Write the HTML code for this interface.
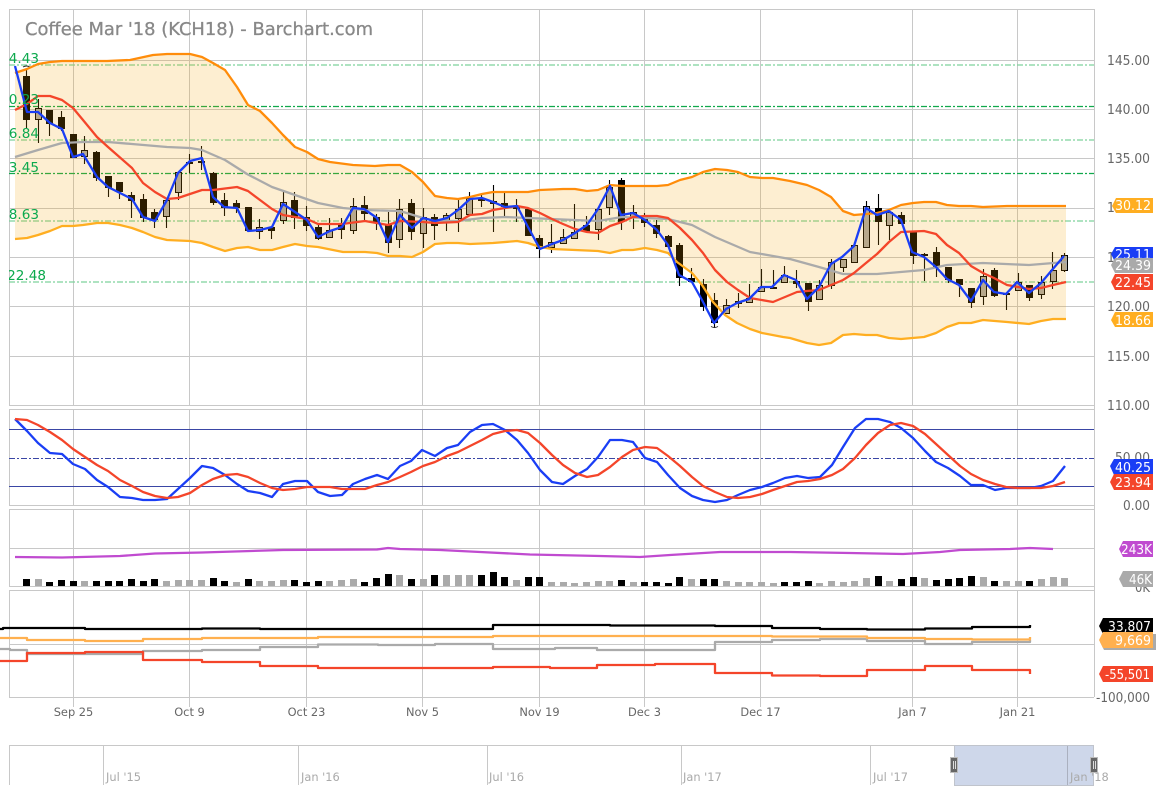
<!DOCTYPE html>
<html><head><meta charset="utf-8"><title>Coffee Mar '18 (KCH18) - Barchart.com</title>
<style>
html,body{margin:0;padding:0;background:#fff;width:1156px;height:800px;overflow:hidden}
svg{display:block}
text{font-family:"DejaVu Sans","Liberation Sans",sans-serif}
.ax{font-size:13.2px;fill:#666}
.xl{font-size:11.4px;fill:#666;text-anchor:middle}
.nv{font-size:11.4px;fill:#aaa}
.bd{font-size:13.4px;fill:#fff;text-anchor:end}
.fb{font-size:13.6px;fill:#0ca94d;text-anchor:end}
.l{fill:none;stroke-width:2.3;stroke-linejoin:round}
</style></head><body>
<svg width="1156" height="800" viewBox="0 0 1156 800" xmlns="http://www.w3.org/2000/svg">
<defs><clipPath id="c"><rect x="9" y="9" width="1086" height="396"/></clipPath></defs>
<rect width="1156" height="800" fill="#fff"/>

<!-- grid -->
<path fill="none" stroke="#c8c8c8" stroke-width="1" d="M9 9.5H1094.5M9 60.5H1094M9 109.5H1094M9 158.5H1094M9 208.5H1094M9 257.5H1094M9 306.5H1094M9 356.5H1094M9 405.5H1094M9 409.5H1094M9 505.5H1094M9 509.5H1094M9 548.5H1094M9 586.5H1094M9 590.5H1094M9 644.5H1094M9 697.5H1094
M1094.5 9V697
M9.5 9V405M9.5 409V505M9.5 509V586M9.5 590V697
M73.5 9V405M73.5 409V505M73.5 509V586M73.5 590V707
M189.5 9V405M189.5 409V505M189.5 509V586M189.5 590V707
M306.5 9V405M306.5 409V505M306.5 509V586M306.5 590V707
M422.5 9V405M422.5 409V505M422.5 509V586M422.5 590V707
M539.5 9V405M539.5 409V505M539.5 509V586M539.5 590V707
M644.5 9V405M644.5 409V505M644.5 509V586M644.5 590V707
M760.5 9V405M760.5 409V505M760.5 509V586M760.5 590V707
M912.5 9V405M912.5 409V505M912.5 509V586M912.5 590V707
M1017.5 9V405M1017.5 409V505M1017.5 509V586M1017.5 590V707"/>

<!-- title -->
<text x="25" y="35" font-size="18" fill="#888" stroke="#888" stroke-width=".3" textLength="348" lengthAdjust="spacingAndGlyphs">Coffee Mar '18 (KCH18) - Barchart.com</text>

<!-- fib lines -->
<g fill="none" stroke-dasharray="6 2 2 2" stroke-width="1.2">
<path stroke="#7dd29c" d="M9 65H1094M9 140H1094M9 221H1094M9 282H1094"/>
<path stroke="#10a84c" d="M9 106.500H1094M9 173.500H1094"/>
</g>

<!-- wicks -->
<path fill="none" stroke="#000" stroke-width="1.1" d="M26.5 68V128M38.5 99V143M49.5 110V136M61.5 111V131M73.5 134V158M84.5 136V164M96.5 151V181M108.5 176V197M119.5 182V199M131.5 192V218M143.5 194V222M154.5 209V228M166.5 200V228M178.5 172V200M189.5 154V173M201.5 146V170M213.5 172V205M224.5 193V216M236.5 200V213M248.5 207V231M259.5 219V239M271.5 226V239M283.5 192V224M294.5 192V229M306.5 206V231M318.5 225V240M329.5 218V237M341.5 218V239M353.5 198V234M364.5 196V220M376.5 214V230M388.5 212V253M399.5 199V248M411.5 199V240M423.5 208V248M434.5 214V240M446.5 213V231M458.5 200V232M469.5 192V215M481.5 195V207M493.5 185V232M504.5 193V218M516.5 199V222M528.5 209V236M539.5 235V258M551.5 224V253M563.5 229V244M574.5 204V238M586.5 216V232M598.5 209V240M609.5 180V215M621.5 178V230M633.5 205V229M644.5 213V227M656.5 220V238M668.5 235V247M679.5 243V286M691.5 268V282M703.5 279V311M714.5 293V328M726.5 299V313M738.5 293V308M749.5 284V302M761.5 269V291M773.5 270V289M784.5 266V282M796.5 270V288M808.5 283V311M819.5 280V299M831.5 259V289M843.5 259V272M854.5 242V263M866.5 201V247M878.5 194V245M889.5 211V240M901.5 212V224M913.5 231V264M924.5 253V281M936.5 247V277M948.5 267V283M959.5 279V297M971.5 288V308M983.5 269V305M994.5 268V297M1006.5 293V310M1018.5 273V290M1029.5 285V301M1041.5 276V299M1052.5 252V289M1064.5 253V272"/>
<!-- small markers -->
<path fill="none" stroke="#222" stroke-width="1" d="M23 67q3.5-2 7 0M711 326.500q3.500 2 7 0"/>

<!-- dark bodies -->
<path fill="#000" d="M23 76h7v44h-7zM46 110h7v14h-7zM58 117h7v12h-7zM70 134h7v24h-7zM93 152h7v26h-7zM105 176h7v12h-7zM116 182h7v10h-7zM128 195h7v6h-7zM140 199h7v19h-7zM151 212h7v8h-7zM186 162h7v2h-7zM198 161h7v2h-7zM210 173h7v30h-7zM221 200h7v8h-7zM233 203h7v5h-7zM245 207h7v24h-7zM268 227h7v4h-7zM291 200h7v18h-7zM303 217h7v9h-7zM315 227h7v12h-7zM338 225h7v5h-7zM361 205h7v9h-7zM373 217h7v5h-7zM385 225h7v18h-7zM408 203h7v29h-7zM431 217h7v9h-7zM478 198h7v3h-7zM490 201h7v3h-7zM501 203h7v4h-7zM513 206h7v3h-7zM525 209h7v27h-7zM536 238h7v11h-7zM583 225h7v7h-7zM618 180h7v42h-7zM641 218h7v5h-7zM653 225h7v9h-7zM665 236h7v11h-7zM676 245h7v33h-7zM688 278h7v4h-7zM700 284h7v23h-7zM711 300h7v23h-7zM735 301h7v3h-7zM770 287h7v2h-7zM793 281h7v3h-7zM805 283h7v19h-7zM875 208h7v14h-7zM898 215h7v9h-7zM910 232h7v24h-7zM921 254h7v2h-7zM933 252h7v15h-7zM945 267h7v13h-7zM956 279h7v6h-7zM968 288h7v15h-7zM991 270h7v26h-7zM1003 293h7v2h-7zM1026 285h7v13h-7z"/>
<!-- hollow bodies -->
<path fill="#aaa" stroke="#000" stroke-width="1" d="M35.500 108.500h6v11h-6zM81.500 150.500h6v6h-6zM163.500 200.500h6v16h-6zM175.500 172.500h6v20h-6zM256.500 227.500h6v4h-6zM280.500 202.500h6v18h-6zM326.500 230.500h6v7h-6zM350.500 206.500h6v24h-6zM396.500 209.500h6v30h-6zM420.500 217.500h6v16h-6zM443.500 215.500h6v6h-6zM455.500 209.500h6v9h-6zM466.500 198.500h6v16h-6zM548.500 242.500h6v5h-6zM560.500 237.500h6v6h-6zM571.500 232.500h6v6h-6zM595.500 209.500h6v20h-6zM606.500 187.500h6v20h-6zM630.500 212.500h6v5h-6zM723.500 305.500h6v8h-6zM746.500 298.500h6v4h-6zM758.500 287.500h6v4h-6zM781.500 275.500h6v7h-6zM816.500 285.500h6v14h-6zM828.500 262.500h6v23h-6zM840.500 259.500h6v8h-6zM851.500 245.500h6v17h-6zM863.500 206.500h6v41h-6zM886.500 212.500h6v13h-6zM980.500 276.500h6v20h-6zM1015.500 282.500h6v8h-6zM1038.500 282.500h6v12h-6zM1050.500 270.500h6v11h-6zM1061.500 255.500h6v15h-6z"/>

<!-- band fill -->
<path fill="#f5a000" fill-opacity=".18" d="M15 73L27 69L38 64L50 62L62 61L83 61L107 61L130 60L153 55L167 54L190 54L202 57L213 63L225 70L237 87L248 105L260 111L272 123L283 135L295 147L307 152L318 159L330 162L353 165L375 166L388 165L400 165L412 172L423 182L435 196L447 198L458 199L470 197L482 194L493 192L505 192L528 192L540 190L563 189L575 189L587 191L598 190L610 185L622 186L645 186L657 186L668 185L680 180L692 177L703 172L715 169L727 170L738 172L750 177L762 178L773 178L790 181L807 185L819 190L831 197L843 211L854 215L866 214L877 213L889 210L901 205L913 203L924 202L936 202L947 205L959 206L971 206L983 207L1007 206L1029 206L1041 206L1066 206L1066 319L1053 319L1041 321L1029 324L1007 322L983 320L971 323L959 323L947 327L936 333L924 337L901 339L889 338L877 335L866 335L854 334L843 335L831 343L819 345L807 343L790 338L783 337L762 333L750 329L737 323L725 315L713 302L702 285L692 273L677 262L668 253L657 250L645 248L633 250L622 250L610 253L598 251L575 250L552 249L540 247L528 243L517 241L493 243L470 244L458 243L447 243L435 244L423 252L412 257L400 256L388 256L377 253L365 252L343 252L318 247L307 246L295 244L283 247L272 250L260 250L248 247L237 248L225 251L213 247L202 243L190 241L167 240L155 237L143 232L132 228L120 225L108 223L97 223L83 225L73 226L62 226L50 231L38 235L27 238L15 239Z"/>

<!-- bollinger lines -->
<path class="l" stroke="#ff8c0a" d="M15 73L27 69L38 64L50 62L62 61L83 61L107 61L130 60L153 55L167 54L190 54L202 57L213 63L225 70L237 87L248 105L260 111L272 123L283 135L295 147L307 152L318 159L330 162L353 165L375 166L388 165L400 165L412 172L423 182L435 196L447 198L458 199L470 197L482 194L493 192L505 192L528 192L540 190L563 189L575 189L587 191L598 190L610 185L622 186L645 186L657 186L668 185L680 180L692 177L703 172L715 169L727 170L738 172L750 177L762 178L773 178L790 181L807 185L819 190L831 197L843 211L854 215L866 214L877 213L889 210L901 205L913 203L924 202L936 202L947 205L959 206L971 206L983 207L1007 206L1029 206L1041 206L1066 206"/>
<path class="l" stroke="#ffae21" d="M15 239L27 238L38 235L50 231L62 226L73 226L83 225L97 223L108 223L120 225L132 228L143 232L155 237L167 240L190 241L202 243L213 247L225 251L237 248L248 247L260 250L272 250L283 247L295 244L307 246L318 247L343 252L365 252L377 253L388 256L400 256L412 257L423 252L435 244L447 243L458 243L470 244L493 243L517 241L528 243L540 247L552 249L575 250L598 251L610 253L622 250L633 250L645 248L657 250L668 253L677 262L692 273L702 285L713 302L725 315L737 323L750 329L762 333L783 337L790 338L807 343L819 345L831 343L843 335L854 334L866 335L877 335L889 338L901 339L924 337L936 333L947 327L959 323L971 323L983 320L1007 322L1029 324L1041 321L1053 319L1066 319"/>
<!-- gray MA -->
<path class="l" stroke="#aaa" d="M15 157L38 150L62 143L83 142L108 142L132 144L167 147L190 148L202 150L225 160L247 174L272 187L295 195L318 203L343 208L365 210L400 211L423 218L435 221L458 221L482 218L505 217L528 218L575 220L598 221L622 217L645 218L668 219L692 225L715 237L750 252L773 256L790 259L819 267L843 274L877 274L924 270L947 265L983 263L1029 265L1066 262"/>
<!-- red MA -->
<path class="l" stroke="#f4452a" d="M15 110L27 104L38 96L50 96L62 100L73 108L83 120L97 137L108 147L132 168L143 183L155 192L167 199L178 198L190 194L202 190L213 190L237 187L248 191L260 200L272 209L283 215L295 217L307 219L318 224L342 224L365 221L388 225L400 221L423 222L435 223L458 222L470 215L482 214L493 210L505 208L517 206L528 208L540 213L552 219L563 224L575 229L587 232L598 233L610 226L622 222L633 217L645 216L657 216L668 218L680 228L692 240L703 253L715 270L727 282L738 290L750 298L773 302L785 297L797 292L807 291L819 290L831 285L843 280L854 273L866 263L877 254L889 242L901 232L924 231L936 234L947 245L959 253L971 266L983 273L994 278L1007 285L1029 289L1041 288L1053 285L1066 282"/>
<!-- blue -->
<path class="l" stroke="#1a3ef5" d="M15 66L27 112L38 112L50 123L62 129L73 157L83 154L97 177L108 187L132 199L143 217L155 221L167 200L178 173L190 161L202 158L213 197L224 207L237 208L248 231L260 230L272 227L283 204L295 212L307 220L318 237L330 231L342 227L353 208L364 209L377 218L388 242L400 215L412 228L423 218L435 221L447 218L458 210L470 199L482 198L493 202L505 207L517 206L528 227L540 249L552 244L563 240L575 233L587 225L598 209L610 186L621 215L633 213L645 220L657 230L668 245L679 275L692 282L702 300L714 323L726 309L737 303L749 299L761 287L772 287L784 275L796 280L807 299L819 287L831 264L842 257L854 246L866 208L877 215L889 211L901 220L912 252L924 257L936 267L947 279L959 285L971 301L983 280L994 292L1006 294L1017 282L1029 293L1041 283L1052 270L1064 256"/>

<!-- fib labels -->
<g clip-path="url(#c)">
<text class="fb" x="39" y="63">144.43</text>
<text class="fb" x="39" y="104">140.23</text>
<text class="fb" x="39" y="138">136.84</text>
<text class="fb" x="39" y="172">133.45</text>
<text class="fb" x="39" y="219">128.63</text>
<text class="fb" x="46" y="280">122.48</text>
</g>

<!-- oscillator refs -->
<path fill="none" stroke="#3a46a5" stroke-width="1" d="M9 429.500H1094M9 486.500H1094"/>
<path fill="none" stroke="#3a46a5" stroke-width="1" stroke-dasharray="6 2 2 2" d="M9 458.500H1094"/>
<path class="l" stroke="#1a3ef5" d="M15 419L27 431L38 443L50 453L62 454L73 464L85 469L97 480L108 487L120 497L132 498L143 500L155 500L167 499L178 489L190 478L202 466L213 468L225 475L237 484L248 491L260 493L272 497L283 484L295 481L307 481L318 492L330 496L342 495L353 484L365 479L377 475L388 479L400 466L411 461L422 450L435 456L447 448L458 445L470 432L482 425L493 424L505 430L517 440L528 453L540 470L552 482L563 484L575 476L587 469L598 457L610 440L622 440L633 442L645 458L657 462L668 475L680 488L692 496L703 500L715 502L727 500L738 495L750 490L762 487L773 483L785 478L797 476L808 478L820 477L832 465L843 447L855 428L866 419L878 419L890 422L901 428L913 438L925 451L936 462L948 468L960 476L971 485L983 485L995 490L1006 488L1018 488L1030 488L1041 486L1053 481L1065 466"/>
<path class="l" stroke="#f4452a" d="M15 419L27 420L38 425L50 432L62 440L73 449L85 457L97 465L108 471L120 480L132 486L143 492L155 496L167 498L178 497L190 493L202 485L213 479L225 475L237 474L248 477L260 483L272 488L283 490L295 489L307 487L330 487L342 489L365 489L377 485L388 482L400 477L411 472L423 466L435 462L447 456L458 452L470 446L482 440L493 434L505 431L517 430L528 433L540 443L552 455L563 465L575 473L587 477L598 475L610 467L622 457L633 450L645 447L657 448L668 456L680 466L692 477L703 486L715 492L727 497L738 498L750 497L762 494L773 490L785 486L797 482L808 481L820 479L832 475L843 469L855 458L866 445L878 433L890 425L901 423L913 426L925 434L936 444L948 455L960 466L971 474L983 480L995 484L1006 487L1018 488L1030 488L1041 488L1053 486L1065 482"/>

<!-- volume -->
<path fill="#000" d="M23 579h7v7h-7zM46 582h7v4h-7zM58 580h7v6h-7zM70 581h7v5h-7zM93 581h7v5h-7zM105 581h7v5h-7zM116 581h7v5h-7zM128 579h7v7h-7zM140 581h7v5h-7zM151 579h7v7h-7zM210 578h7v8h-7zM221 581h7v5h-7zM245 579h7v7h-7zM291 580h7v6h-7zM303 582h7v4h-7zM315 581h7v5h-7zM361 582h7v4h-7zM373 578h7v8h-7zM385 574h7v12h-7zM408 579h7v7h-7zM431 575h7v11h-7zM478 575h7v11h-7zM490 572h7v14h-7zM501 577h7v9h-7zM525 577h7v9h-7zM536 577h7v9h-7zM618 580h7v6h-7zM641 582h7v4h-7zM653 582h7v4h-7zM665 583h7v3h-7zM676 577h7v9h-7zM700 579h7v7h-7zM711 579h7v7h-7zM781 582h7v4h-7zM793 582h7v4h-7zM805 581h7v5h-7zM875 576h7v10h-7zM898 579h7v7h-7zM910 577h7v9h-7zM933 580h7v6h-7zM945 579h7v7h-7zM956 578h7v8h-7zM968 576h7v10h-7zM991 581h7v5h-7zM1026 581h7v5h-7z"/>
<path fill="#aaa" d="M35 579h7v7h-7zM81 581h7v5h-7zM163 581h7v5h-7zM175 580h7v6h-7zM186 580h7v6h-7zM198 580h7v6h-7zM233 582h7v4h-7zM256 581h7v5h-7zM268 581h7v5h-7zM280 580h7v6h-7zM326 581h7v5h-7zM338 580h7v6h-7zM350 579h7v7h-7zM396 575h7v11h-7zM420 579h7v7h-7zM443 575h7v11h-7zM455 575h7v11h-7zM466 575h7v11h-7zM513 580h7v6h-7zM548 582h7v4h-7zM560 582h7v4h-7zM571 583h7v3h-7zM583 582h7v4h-7zM595 581h7v5h-7zM606 581h7v5h-7zM630 582h7v4h-7zM688 579h7v7h-7zM723 581h7v5h-7zM735 582h7v4h-7zM746 582h7v4h-7zM758 582h7v4h-7zM770 583h7v3h-7zM816 583h7v3h-7zM828 581h7v5h-7zM840 582h7v4h-7zM851 581h7v5h-7zM863 578h7v8h-7zM886 581h7v5h-7zM921 578h7v8h-7zM980 577h7v9h-7zM1003 581h7v5h-7zM1015 581h7v5h-7zM1038 579h7v7h-7zM1050 577h7v9h-7zM1061 578h7v8h-7z"/>
<path class="l" stroke="#c04bd0" d="M15 557L62 557.500L120 556L155 553.500L202 552.500L283 550L377 549.500L388 548L400 549L440 550L480 552L530 554.500L600 556L640 557L670 555L720 552L790 552L850 553L903 554L940 552L960 550L1010 549L1030 548L1053 549"/>

<!-- commitment of traders steps -->
<path class="l" stroke="#aaa" d="M0 649H10V650H27V654H143V651H202V650H260V647H318V644.500H378V645H435V644H493V649H555V648H597V650H715V642H772V640H820V639H867V641H925V644H972V642H1030V640"/>
<path class="l" stroke="#ffb04f" d="M0 638H27V640H85V641H143V639H202V638H318V637H493V636H772V636.500H867V638H925V639H972V639.500H1030V637"/>
<path class="l" stroke="#000" d="M0 629H3V628H85V629H202V628.500H260V629H493V625H610V625.500H715V626H772V628H820V629H867V629.500H925V628.500H972V627H1030V625"/>
<path class="l" stroke="#f4452a" d="M0 661H27V653H85V652H143V660H202V662H260V666H318V668H493V667H550V668H597V665H655V664H715V673H772V675.500H820V676H867V670H925V666H972V670H1030V674"/>

<!-- y axis -->
<text class="ax" x="1107" y="65" textLength="43" lengthAdjust="spacingAndGlyphs">145.00</text>
<text class="ax" x="1107" y="114" textLength="43" lengthAdjust="spacingAndGlyphs">140.00</text>
<text class="ax" x="1107" y="163" textLength="43" lengthAdjust="spacingAndGlyphs">135.00</text>
<text class="ax" x="1107" y="212" textLength="43" lengthAdjust="spacingAndGlyphs">130.00</text>
<text class="ax" x="1107" y="262" textLength="43" lengthAdjust="spacingAndGlyphs">125.00</text>
<text class="ax" x="1107" y="311" textLength="43" lengthAdjust="spacingAndGlyphs">120.00</text>
<text class="ax" x="1107" y="361" textLength="43" lengthAdjust="spacingAndGlyphs">115.00</text>
<text class="ax" x="1107" y="410" textLength="43" lengthAdjust="spacingAndGlyphs">110.00</text>
<text class="ax" x="1115" y="462" textLength="35" lengthAdjust="spacingAndGlyphs">50.00</text>
<text class="ax" x="1123" y="510" textLength="27" lengthAdjust="spacingAndGlyphs">0.00</text>
<text class="ax" x="1135" y="592" textLength="15" lengthAdjust="spacingAndGlyphs">0K</text>
<text class="ax" x="1096" y="702" textLength="54" lengthAdjust="spacingAndGlyphs">-100,000</text>

<!-- badges -->
<path fill="#ffae21" d="M1112 206l4-8h37v15h-37z"/><text class="bd" x="1151" y="210" textLength="36" lengthAdjust="spacingAndGlyphs">30.12</text>
<path fill="#1a3ef5" d="M1111 254l4-7h38v15h-38z"/><text class="bd" x="1151" y="259" textLength="36" lengthAdjust="spacingAndGlyphs">25.11</text>
<path fill="#aaa" d="M1111 265l4-7h38v15h-38z"/><text class="bd" x="1151" y="270" textLength="36" lengthAdjust="spacingAndGlyphs">24.39</text>
<path fill="#f4452a" d="M1111 282l4-8h38v16h-38z"/><text class="bd" x="1151" y="287" textLength="36" lengthAdjust="spacingAndGlyphs">22.45</text>
<path fill="#ffae21" d="M1111 320l4-8h38v15h-38z"/><text class="bd" x="1151" y="325" textLength="36" lengthAdjust="spacingAndGlyphs">18.66</text>
<path fill="#1a3ef5" d="M1110 466l4-7h39v16h-39z"/><text class="bd" x="1151" y="472" textLength="36" lengthAdjust="spacingAndGlyphs">40.25</text>
<path fill="#f4452a" d="M1110 482l4-8h39v16h-39z"/><text class="bd" x="1151" y="487" textLength="36" lengthAdjust="spacingAndGlyphs">23.94</text>
<path fill="#c04bd0" d="M1119 549l4-8h30v16h-30z"/><text class="bd" x="1152" y="554" textLength="31" lengthAdjust="spacingAndGlyphs">243K</text>
<path fill="#aaa" d="M1119 579l4-8h30v16h-30z"/><text class="bd" x="1152" y="584" textLength="23" lengthAdjust="spacingAndGlyphs">46K</text>
<path fill="#000" d="M1099 626l4-8h50v16h-50z"/><text class="bd" x="1151" y="631" textLength="43" lengthAdjust="spacingAndGlyphs">33,807</text>
<path fill="#aaa" d="M1100 642l4-8h53v16h-53z"/>
<path fill="#ffb04f" d="M1099 640l4-8h50v16h-50z"/><text class="bd" x="1151" y="645" textLength="36" lengthAdjust="spacingAndGlyphs">9,669</text>
<path fill="#f4452a" d="M1099 674l4-8h50v16h-50z"/><text class="bd" x="1150" y="679" textLength="45" lengthAdjust="spacingAndGlyphs">-55,501</text>

<!-- x axis -->
<text class="xl" x="73.500" y="716">Sep 25</text>
<text class="xl" x="189.500" y="716">Oct 9</text>
<text class="xl" x="306.500" y="716">Oct 23</text>
<text class="xl" x="422.500" y="716">Nov 5</text>
<text class="xl" x="539.500" y="716">Nov 19</text>
<text class="xl" x="644.500" y="716">Dec 3</text>
<text class="xl" x="760.500" y="716">Dec 17</text>
<text class="xl" x="912.500" y="716">Jan 7</text>
<text class="xl" x="1017.500" y="716">Jan 21</text>

<!-- navigator -->
<path fill="none" stroke="#c8c8c8" d="M9 745.500H1094M9.500 745V785M103.500 745V785M298.500 745V785M487.500 745V785M681.500 745V785M870.500 745V785"/>
<rect x="954.500" y="745.500" width="139" height="40" fill="#ced7ea" stroke="#c0c4cc"/>
<path stroke="#aab0bf" d="M1067.500 746V785"/>
<text class="nv" x="106" y="781">Jul '15</text>
<text class="nv" x="301" y="781">Jan '16</text>
<text class="nv" x="489" y="781">Jul '16</text>
<text class="nv" x="683" y="781">Jan '17</text>
<text class="nv" x="873" y="781">Jul '17</text>
<text class="nv" x="1070" y="781">Jan '18</text>
<rect x="950.500" y="757.500" width="7" height="15" fill="#666" stroke="#bbb"/>
<path stroke="#ddd" d="M953.500 761V769M955.500 761V769"/>
<rect x="1090.500" y="757.500" width="7" height="15" fill="#666" stroke="#bbb"/>
<path stroke="#ddd" d="M1093.500 761V769M1095.500 761V769"/>
</svg>
</body></html>
